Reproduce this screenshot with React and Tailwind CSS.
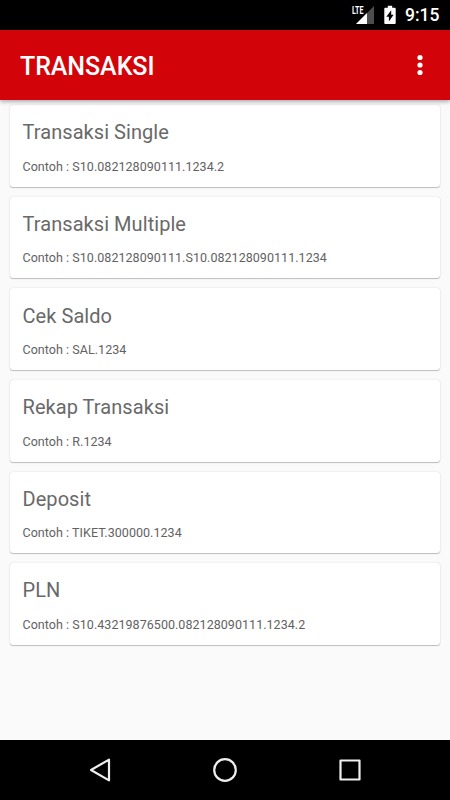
const items = [
  { title: 'Transaksi Single', example: 'S10.082128090111.1234.2' },
  { title: 'Transaksi Multiple', example: 'S10.082128090111.S10.082128090111.1234' },
  { title: 'Cek Saldo', example: 'SAL.1234' },
  { title: 'Rekap Transaksi', example: 'R.1234' },
  { title: 'Deposit', example: 'TIKET.300000.1234' },
  { title: 'PLN', example: 'S10.43219876500.082128090111.1234.2' },
]

function StatusBar() {
  return (
    <div className="h-[30px] shrink-0 bg-black flex items-center justify-end pr-[10px] text-white">
      {/* LTE signal */}
      <svg className="w-[24px] h-[30px]" viewBox="351 0 24 30">
        <path d="M374 6V24H356Z" fill="#4d4d4d" />
        <path d="M367 13V24H356Z" fill="#fff" />
        <path d="M350 5h14.500v10h-14.500z" fill="#000" />
        <text x="352" y="14" fontSize="11" fontWeight="700" fill="#fff" fontFamily="Roboto, sans-serif" textLength="11.5" lengthAdjust="spacingAndGlyphs">LTE</text>
      </svg>
      {/* Charging battery */}
      <svg className="w-[12px] h-[30px] ml-[9px]" viewBox="384 0 12 30">
        <path d="M387.8 5.8h4.4v2h2.600q.9 0 .9.9v14.400q0 .9-.9.9h-9.600q-.9 0-.9-.9V8.700q0-.9.9-.9h2.600z" fill="#fff" />
        <path d="M391.200 10.200v4.600h2.400L388.900 21.400v-4.700h-2.600z" fill="#000" />
      </svg>
      <span className="w-[35px] ml-[9px] text-[17.5px] leading-[30px] font-medium whitespace-nowrap">9:15</span>
    </div>
  )
}

function Toolbar() {
  return (
    <header className="relative z-10 h-[70px] shrink-0 bg-[#d20309] flex items-center justify-between pl-5 pr-[25px] shadow-[0_2px_4px_rgba(0,0,0,0.3)]">
      <h1 className="text-[25px] leading-[30px] font-medium tracking-[-0.06px] text-white pt-[3px]">TRANSAKSI</h1>
      <svg className="w-[10px] h-[24px]" viewBox="0 0 10 24" fill="#fff">
        <circle cx="5" cy="4.500" r="2.600" />
        <circle cx="5" cy="12" r="2.600" />
        <circle cx="5" cy="19.500" r="2.600" />
      </svg>
    </header>
  )
}

function Card({ title, example }) {
  return (
    <li className="h-[81.67px] bg-white rounded-[3px] pl-[12.5px] pt-[13.2px] shadow-[0_1px_1px_rgba(0,0,0,0.22),0_0_1.5px_rgba(0,0,0,0.18)]">
      <h2 className="text-[20px] leading-[28px] tracking-[0.06px] text-[#696969]">{title}</h2>
      <p className="mt-[10.6px] text-[12.5px] leading-[20px] tracking-[0.045px] text-[#626262]">Contoh : {example}</p>
    </li>
  )
}

function NavBar() {
  return (
    <nav className="h-[60px] shrink-0 bg-black flex items-center justify-around px-[37.5px]">
      <svg className="w-[30px] h-[30px]" viewBox="0 0 30 30" fill="none" stroke="#eee" strokeWidth="2.200" strokeLinejoin="round">
        <path d="M24 4.600V25.400L6 15Z" />
      </svg>
      <svg className="w-[30px] h-[30px]" viewBox="0 0 30 30" fill="none" stroke="#eee" strokeWidth="2.200">
        <circle cx="15" cy="15" r="10.800" />
      </svg>
      <svg className="w-[30px] h-[30px]" viewBox="0 0 30 30" fill="none" stroke="#eee" strokeWidth="2.200" strokeLinejoin="round">
        <rect x="5.500" y="5.500" width="19" height="19" />
      </svg>
    </nav>
  )
}

export default function App() {
  return (
    <div className="w-[450px] h-[800px] flex flex-col overflow-hidden bg-[#fafafa] font-[Roboto,sans-serif]">
      <StatusBar />
      <Toolbar />
      <ul className="flex-1 flex flex-col gap-[10px] px-[10px] pt-[5px]">
        {items.map((item) => (
          <Card key={item.title} title={item.title} example={item.example} />
        ))}
      </ul>
      <NavBar />
    </div>
  )
}
